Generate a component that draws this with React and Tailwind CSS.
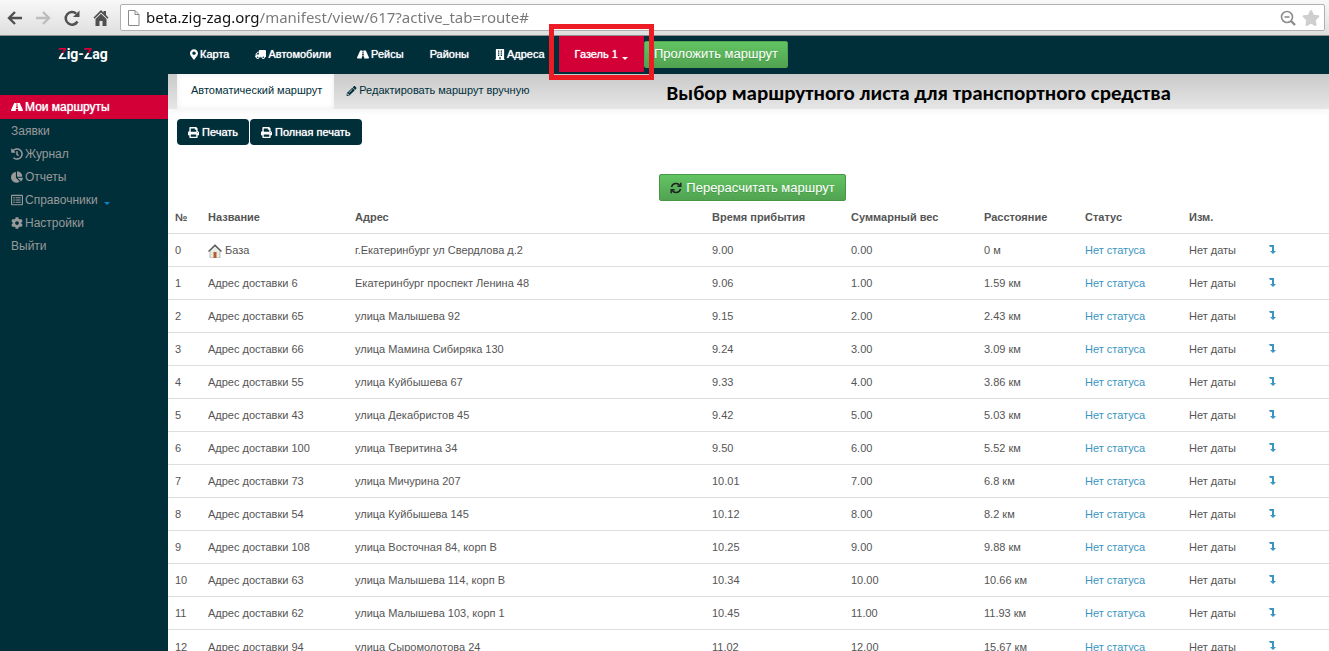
import React, { useState } from 'react';
import {
  FaMapMarkerAlt,
  FaTruck,
  FaRoad,
  FaBuilding,
  FaPencilAlt,
  FaPrint,
  FaHistory,
  FaChartPie,
  FaRegListAlt,
  FaCog,
  FaStar,
} from 'react-icons/fa';

const stops = [
  ['База', 'г.Екатеринбург ул Свердлова д.2', '9.00', '0.00', '0 м'],
  ['Адрес доставки 6', 'Екатеринбург проспект Ленина 48', '9.06', '1.00', '1.59 км'],
  ['Адрес доставки 65', 'улица Малышева 92', '9.15', '2.00', '2.43 км'],
  ['Адрес доставки 66', 'улица Мамина Сибиряка 130', '9.24', '3.00', '3.09 км'],
  ['Адрес доставки 55', 'улица Куйбышева 67', '9.33', '4.00', '3.86 км'],
  ['Адрес доставки 43', 'улица Декабристов 45', '9.42', '5.00', '5.03 км'],
  ['Адрес доставки 100', 'улица Тверитина 34', '9.50', '6.00', '5.52 км'],
  ['Адрес доставки 73', 'улица Мичурина 207', '10.01', '7.00', '6.8 км'],
  ['Адрес доставки 54', 'улица Куйбышева 145', '10.12', '8.00', '8.2 км'],
  ['Адрес доставки 108', 'улица Восточная 84, корп В', '10.25', '9.00', '9.88 км'],
  ['Адрес доставки 63', 'улица Малышева 114, корп В', '10.34', '10.00', '10.66 км'],
  ['Адрес доставки 62', 'улица Малышева 103, корп 1', '10.45', '11.00', '11.93 км'],
  ['Адрес доставки 94', 'улица Сыромолотова 24', '11.02', '12.00', '15.67 км'],
];

const menu = [
  { name: 'Мои маршруты', icon: FaRoad },
  { name: 'Заявки' },
  { name: 'Журнал', icon: FaHistory },
  { name: 'Отчеты', icon: FaChartPie },
  { name: 'Справочники', icon: FaRegListAlt, caret: true },
  { name: 'Настройки', icon: FaCog },
  { name: 'Выйти' },
];

function BrowserBar() {
  const [url, setUrl] = useState('beta.zig-zag.org/manifest/view/617?active_tab=route#');

  return (
    <div className="flex h-9 shrink-0 items-center border-b border-[#8f8f8f] bg-linear-to-b from-[#f8f8f8] to-[#dfdfdf] pl-[7px] pr-1">
      <div className="flex shrink-0 items-center gap-3 text-[#505050]">
        <button type="button" aria-label="Назад">
          <svg className="h-4 w-4" viewBox="0 0 16 16" fill="none" stroke="currentColor" strokeWidth="2.4">
            <path d="M15 8H2.5M8 2 2 8l6 6" />
          </svg>
        </button>
        <button type="button" aria-label="Вперёд" className="text-[#bdbdbd]">
          <svg className="h-4 w-4" viewBox="0 0 16 16" fill="none" stroke="currentColor" strokeWidth="2.4">
            <path d="M1 8h12.5M8 2l6 6-6 6" />
          </svg>
        </button>
        <button type="button" aria-label="Обновить">
          <svg className="h-[18px] w-[18px]" viewBox="0 0 18 18">
            <path d="M14.5 12.5A6.3 6.3 0 1 1 13.2 4.6" fill="none" stroke="currentColor" strokeWidth="2.5" />
            <path d="M16.5 1.5V8H10z" fill="currentColor" />
          </svg>
        </button>
        <button type="button" aria-label="Домой">
          <svg className="h-4 w-4" viewBox="0 0 16 16" fill="currentColor">
            <path d="M8 0 .5 7.5l1 1.2L8 2.4l6.5 6.3 1-1.2L13 5V1h-2.5v1.5z" />
            <path d="M8 3.8 2.5 9v7h4v-5h3v5h4V9z" />
          </svg>
        </button>
      </div>
      <div className="ml-[11px] flex h-[27px] min-w-0 flex-1 items-center rounded-xs border border-[#b0b0b0] bg-white pl-[7px] pr-1">
        <svg className="h-4 w-3 shrink-0" viewBox="0 0 12 16" fill="#fff" stroke="#8a8a8a">
          <path d="M.5.5h6.5l4 4v11H.5zM7 .5v4h4" />
        </svg>
        <input
          aria-label="Адрес страницы"
          value={url}
          onChange={(e) => setUrl(e.target.value)}
          className="ml-1.5 min-w-0 flex-1 bg-[linear-gradient(to_right,#111_113px,#777_113px)] bg-clip-text font-['Noto_Sans',sans-serif] text-[15px] text-transparent outline-none"
        />
        <svg className="h-4 w-4 shrink-0" viewBox="0 0 16 16" fill="none" stroke="#8c8c8c" strokeWidth="1.6">
          <circle cx="7" cy="7" r="5.5" />
          <path d="M4.5 7h5" />
          <path d="m11 11 4 4" strokeWidth="2.4" />
        </svg>
        <button type="button" aria-label="В закладки" className="ml-1.5">
          <FaStar className="h-4 w-[18px] text-[#cfcfcf]" />
        </button>
      </div>
    </div>
  );
}

function TopNav() {
  const linkClass = 'flex items-center gap-0.5 whitespace-nowrap';
  const zed = 'bg-[linear-gradient(#d20037_45%,#fff_45%)] bg-clip-text text-transparent';

  return (
    <header className="flex h-[38px] shrink-0 items-center bg-[#002f3a] pb-0.5 text-[11px] text-white">
      <a href="#" className="w-[166px] shrink-0 text-center font-[Roboto,sans-serif] text-sm font-bold">
        <span className={zed}>Z</span>ig-<span className={zed}>Z</span>ag
      </a>
      <nav className="ml-6 flex shrink-0 items-center gap-[26px] [text-shadow:0_0_1px_#fff]">
        <a href="#" className={linkClass}><FaMapMarkerAlt className="w-2" />Карта</a>
        <a href="#" className={linkClass}><FaTruck className="-scale-x-100" />Автомобили</a>
        <a href="#" className={linkClass}><FaRoad className="w-3" />Рейсы</a>
        <a href="#" className={linkClass}>Районы</a>
        <a href="#" className={linkClass}><FaBuilding className="w-2.5" />Адреса</a>
      </nav>
      <div className="relative ml-3.5 flex h-9 shrink-0">
        <button type="button" className="flex items-center gap-1 bg-[#d20037] px-4 [text-shadow:0_0_1px_#fff]">
          Газель 1
          <span className="mt-2 border-x-[3px] border-t-[3px] border-x-transparent border-t-white" />
        </button>
        <div className="pointer-events-none absolute -inset-x-2.5 -top-3 -bottom-2 z-10 border-[5px] border-[#ed1c24]" />
      </div>
      <button type="button" className="h-[27px] shrink-0 rounded-xs border border-[#51a351] bg-linear-to-b from-[#62c462] to-[#51a351] px-[9px] text-[13px] text-white text-shadow-2xs">
        Проложить маршрут
      </button>
    </header>
  );
}

function Sidebar() {
  return (
    <aside className="w-[168px] shrink-0 bg-[#002f3a] pt-[21px]">
      <nav className="flex flex-col text-xs text-[#999]">
        {menu.map(({ name, icon: Icon, caret }, i) => (
          <a
            key={name}
            href="#"
            className={`flex items-center gap-0.5 pl-[11px] ${i === 0 ? 'h-6 bg-[#d20037] text-white [text-shadow:0_0_1px_#fff]' : 'h-[23px]'}`}
          >
            {Icon && <Icon />}
            {name}
            {caret && <span className="ml-1 mt-2 border-x-[3px] border-t-[3px] border-x-transparent border-t-[#0e82c4]" />}
          </a>
        ))}
      </nav>
    </aside>
  );
}

function HouseIcon() {
  return (
    <svg className="h-3.5 w-3.5" viewBox="0 0 14 14">
      <path d="M2 6.5 7 2l5 4.5V14H2z" fill="#eceae4" stroke="#999" strokeWidth=".6" />
      <path d="M.5 7.5 7 1.2l6.5 6.3" fill="none" stroke="#555" strokeWidth="1.3" />
      <path d="M5.5 8h3v6h-3z" fill="#b5602a" />
    </svg>
  );
}

function RouteTable() {
  const head = 'px-[7px] text-left font-bold whitespace-nowrap';
  const cell = 'px-[7px] pt-0.5 whitespace-nowrap';

  return (
    <table className="w-full table-fixed text-[11px] text-[#555]">
      <colgroup>
        <col className="w-[33px]" />
        <col className="w-[147px]" />
        <col />
        <col className="w-[139px]" />
        <col className="w-[133px]" />
        <col className="w-[101px]" />
        <col className="w-[104px]" />
        <col className="w-[80px]" />
        <col className="w-[67px]" />
      </colgroup>
      <thead>
        <tr className="h-8">
          <th className={head}>№</th>
          <th className={head}>Название</th>
          <th className={head}>Адрес</th>
          <th className={head}>Время прибытия</th>
          <th className={head}>Суммарный вес</th>
          <th className={head}>Расстояние</th>
          <th className={head}>Статус</th>
          <th className={head}>Изм.</th>
          <th />
        </tr>
      </thead>
      <tbody>
        {stops.map(([name, address, time, weight, distance], i) => (
          <tr key={name} className="h-[33px] border-t border-[#ddd]">
            <td className={cell}>{i}</td>
            <td className={cell}>
              <span className="flex items-center gap-[3px]">
                {i === 0 && <HouseIcon />}
                {name}
              </span>
            </td>
            <td className={cell}>{address}</td>
            <td className={cell}>{time}</td>
            <td className={cell}>{weight}</td>
            <td className={cell}>{distance}</td>
            <td className={cell}><a href="#" className="text-[#3a95c0]">Нет статуса</a></td>
            <td className={cell}>Нет даты</td>
            <td className="px-[7px]">
              <button type="button" aria-label="Переместить ниже" className="block text-[#3a95c0]">
                <svg className="h-[9px] w-[7px]" viewBox="0 0 7 9" fill="currentColor">
                  <path d="M0 0h5v6h2L4 9 1 6h2V2H1z" />
                </svg>
              </button>
            </td>
          </tr>
        ))}
      </tbody>
    </table>
  );
}

function App() {
  const darkButton = 'flex h-[26px] items-center gap-[3px] rounded-sm bg-[#002f3a] px-[11px] text-white [text-shadow:0_0_1px_#fff]';

  return (
    <div className="flex h-screen flex-col overflow-hidden bg-white font-['Liberation_Sans',Arial,sans-serif]">
      <BrowserBar />
      <TopNav />
      <div className="flex min-h-0 flex-1">
        <Sidebar />
        <main className="min-w-0 flex-1 text-[11px]">
          <div className="flex h-[35px] bg-linear-to-b from-[#cacaca] to-[#e6e6e6] pl-[9px] text-[#002f3a] shadow-[0_2px_6px_#0000000d]">
            <a href="#" className="flex shrink-0 items-center bg-white pb-0.5 pl-3.5 pr-3 shadow-[inset_0_0_6px_#00000014]">Автоматический маршрут</a>
            <a href="#" className="flex shrink-0 items-center px-3 pb-0.5"><FaPencilAlt className="mr-0.5 h-2.5" />Редактировать маршрут вручную</a>
            <h1 className="ml-[125px] self-center whitespace-nowrap pt-1 font-[Carlito,Lato,'Noto_Sans',sans-serif] text-[21px] font-bold text-black">
              Выбор маршрутного листа для транспортного средства
            </h1>
          </div>
          <div className="flex gap-px pl-[9px] pt-2.5">
            <button type="button" className={darkButton}><FaPrint />Печать</button>
            <button type="button" className={darkButton}><FaPrint />Полная печать</button>
          </div>
          <div className="flex justify-center pl-2 pt-[29px]">
            <button type="button" className="flex h-[27px] items-center gap-1 rounded-xs border border-[#469646] bg-linear-to-b from-[#62c462] to-[#51a351] px-2.5 text-[13px] text-white text-shadow-2xs">
              <svg className="h-3 w-3 text-[#222]" viewBox="0 0 12 12" fill="none" stroke="currentColor" strokeWidth="1.5">
                <path d="M1.5 5A4.6 4.6 0 0 1 9.8 3.5M10.5 7a4.6 4.6 0 0 1-8.3 1.5" />
                <path d="M10.8.8v3.4H7.4M1.2 11.2V7.8h3.4" />
              </svg>
              Перерасчитать маршрут
            </button>
          </div>
          <RouteTable />
        </main>
      </div>
    </div>
  );
}

export default App;
